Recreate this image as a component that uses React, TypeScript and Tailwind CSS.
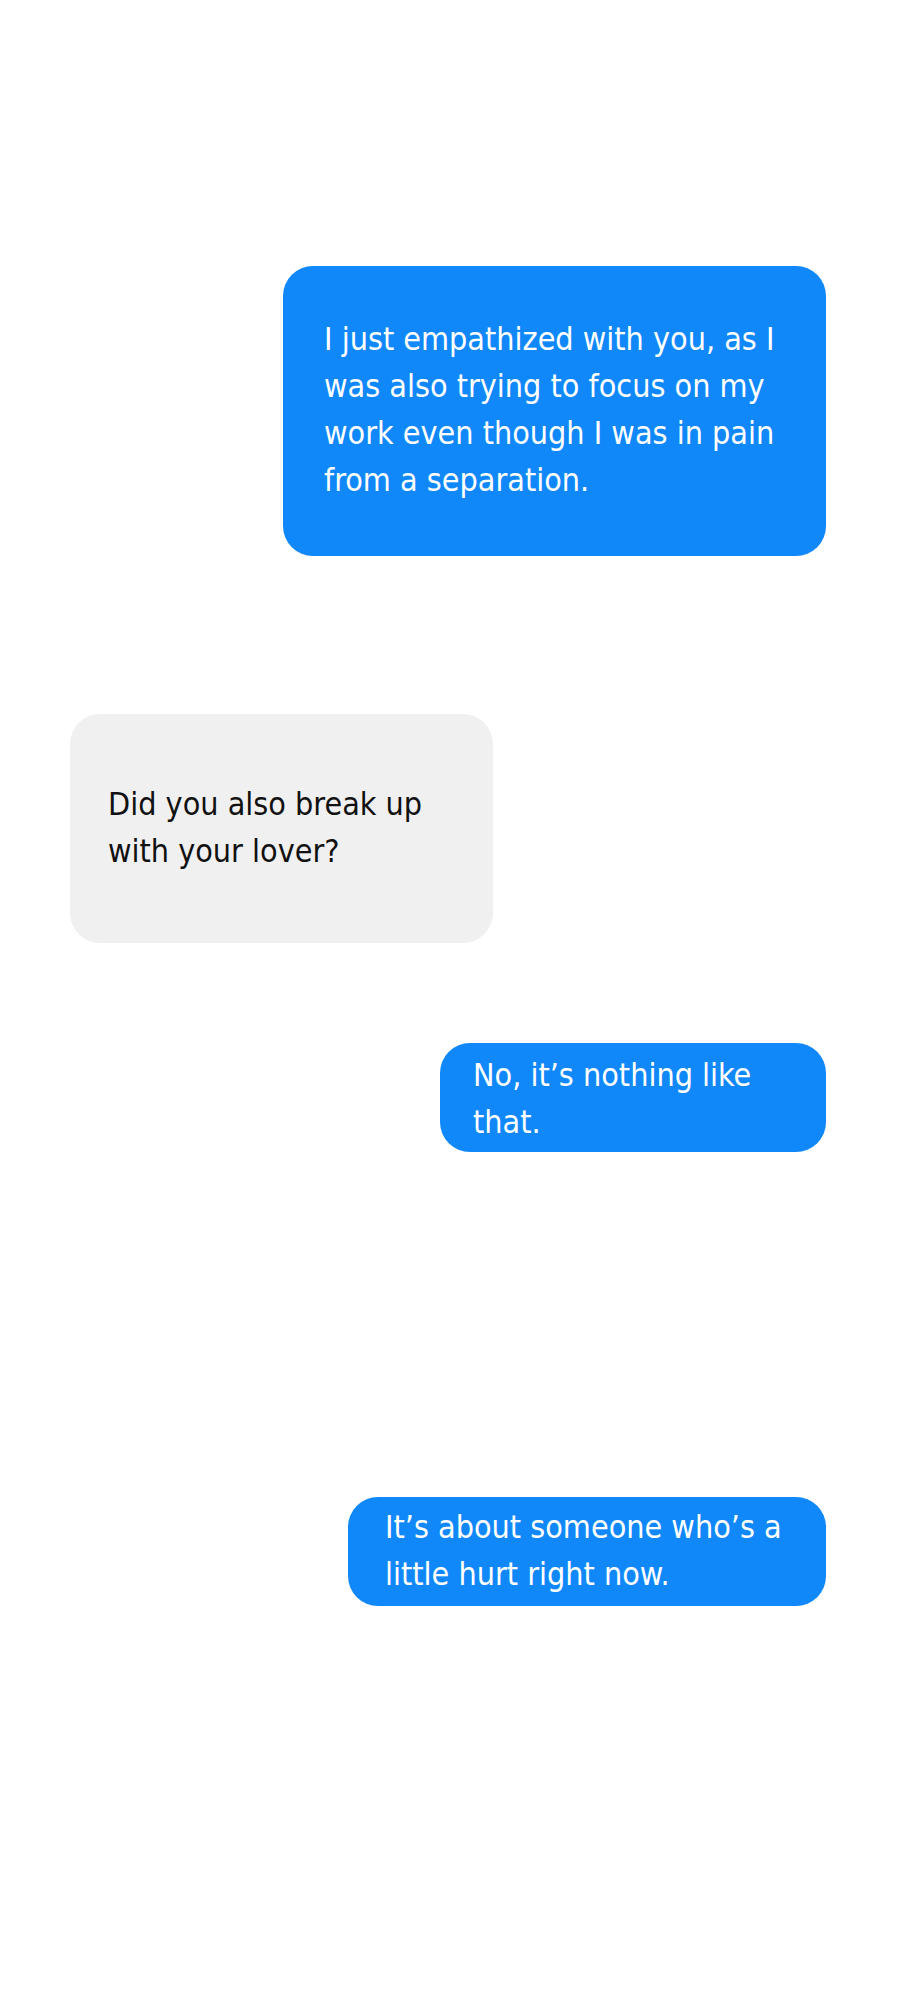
const font = { fontFamily: '"DejaVu Sans Condensed", "Liberation Sans", sans-serif' };

const Sent = ({ lines, className }: { lines: string[]; className: string }) => (
  <div className={`self-end rounded-[30px] bg-[#1088fa] text-white ${className}`}>
    {lines.map((l) => (
      <div key={l} className="whitespace-nowrap">{l}</div>
    ))}
  </div>
);

export default function App() {
  return (
    <div className="min-h-[2000px] bg-white pr-[74px] pl-[70px] pt-[266px]" style={font}>
      <div className="flex flex-col text-[32px] leading-[47px]">
        <Sent
          className="w-[543px] pl-[41px] pt-[50px] pb-[52px] h-[290px]"
          lines={[
            'I just empathized with you, as I',
            'was also trying to focus on my',
            'work even though I was in pain',
            'from a separation.',
          ]}
        />

        <div className="mt-[158px] self-start w-[423px] h-[229px] rounded-[30px] bg-[#f0f0f0] pl-[38px] pt-[67px] text-[#111]">
          <div className="whitespace-nowrap">Did you also break up</div>
          <div className="whitespace-nowrap">with your lover?</div>
        </div>

        <Sent
          className="mt-[100px] w-[386px] h-[109px] rounded-[24px] pl-[33px] pt-[9px]"
          lines={['No, it\u2019s nothing like', 'that.']}
        />

        <Sent
          className="mt-[345px] w-[478px] h-[109px] rounded-[24px] pl-[37px] pt-[7px]"
          lines={['It\u2019s about someone who\u2019s a', 'little hurt right now.']}
        />
      </div>
    </div>
  );
}
